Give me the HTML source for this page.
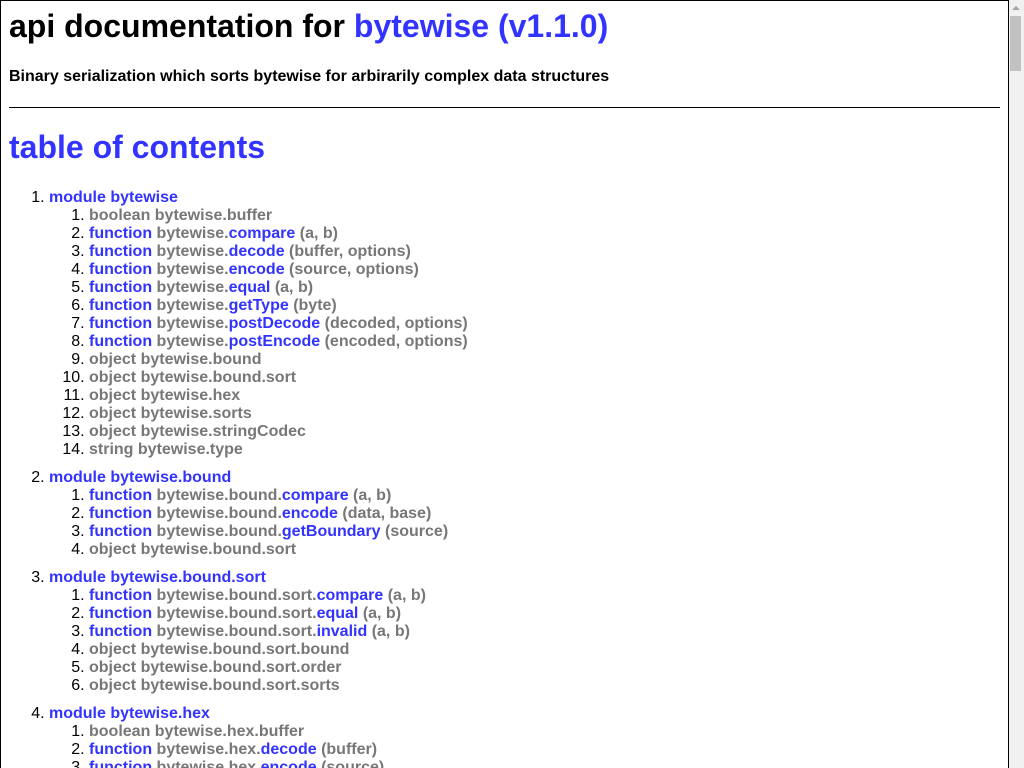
<!DOCTYPE html>
<html><head><style>
html,body{margin:0;padding:0;overflow:hidden;width:1024px;height:768px;background:#fff}
.page{position:absolute;left:0;top:0;width:1009px;height:768px;border:1px solid #000;border-bottom:0;box-sizing:border-box;padding:0 8px;font-family:"Liberation Sans",sans-serif;overflow:hidden}
h1{font-size:32px;line-height:37px;margin:7px 0 0;font-weight:bold}
h3{font-size:16px;line-height:18px;margin:23px 0 0;font-weight:bold}
hr{margin:21px 0 0;border:0;border-top:1px solid #000;height:0}
h1.toc{color:#33f;margin:21px 0 0}
.b{color:#33f}
.g{color:#777}
ol{margin:0;padding-left:40px}
ol.top{margin-top:23px}
li{font-size:16px;line-height:18px}
li>a,li>span{font-weight:bold;text-decoration:none}
ol.top>li{margin-bottom:10px}
.sb{position:absolute;left:1009px;top:0;width:15px;height:768px;background:#f1f1f1}
.th{position:absolute;left:1010px;top:16px;width:11px;height:55px;background:#c1c1c1}
.ar{position:absolute;left:1012px;top:6px;width:0;height:0;border-left:4px solid transparent;border-right:4px solid transparent;border-bottom:4px solid #a3a3a3}
</style></head><body>
<div class="page">
<h1>api documentation for <span class="b">bytewise (v1.1.0)</span></h1>
<h3>Binary serialization which sorts bytewise for arbirarily complex data structures</h3>
<hr>
<h1 class="toc">table of contents</h1>
<ol class="top">
<li><span class="b">module bytewise</span>
<ol>
<li><span class="g">boolean bytewise.buffer</span></li>
<li><span><span class="b">function</span> <span class="g">bytewise.</span><span class="b">compare</span> <span class="g">(a, b)</span></span></li>
<li><span><span class="b">function</span> <span class="g">bytewise.</span><span class="b">decode</span> <span class="g">(buffer, options)</span></span></li>
<li><span><span class="b">function</span> <span class="g">bytewise.</span><span class="b">encode</span> <span class="g">(source, options)</span></span></li>
<li><span><span class="b">function</span> <span class="g">bytewise.</span><span class="b">equal</span> <span class="g">(a, b)</span></span></li>
<li><span><span class="b">function</span> <span class="g">bytewise.</span><span class="b">getType</span> <span class="g">(byte)</span></span></li>
<li><span><span class="b">function</span> <span class="g">bytewise.</span><span class="b">postDecode</span> <span class="g">(decoded, options)</span></span></li>
<li><span><span class="b">function</span> <span class="g">bytewise.</span><span class="b">postEncode</span> <span class="g">(encoded, options)</span></span></li>
<li><span class="g">object bytewise.bound</span></li>
<li><span class="g">object bytewise.bound.sort</span></li>
<li><span class="g">object bytewise.hex</span></li>
<li><span class="g">object bytewise.sorts</span></li>
<li><span class="g">object bytewise.stringCodec</span></li>
<li><span class="g">string bytewise.type</span></li>
</ol></li>
<li><span class="b">module bytewise.bound</span>
<ol>
<li><span><span class="b">function</span> <span class="g">bytewise.bound.</span><span class="b">compare</span> <span class="g">(a, b)</span></span></li>
<li><span><span class="b">function</span> <span class="g">bytewise.bound.</span><span class="b">encode</span> <span class="g">(data, base)</span></span></li>
<li><span><span class="b">function</span> <span class="g">bytewise.bound.</span><span class="b">getBoundary</span> <span class="g">(source)</span></span></li>
<li><span class="g">object bytewise.bound.sort</span></li>
</ol></li>
<li><span class="b">module bytewise.bound.sort</span>
<ol>
<li><span><span class="b">function</span> <span class="g">bytewise.bound.sort.</span><span class="b">compare</span> <span class="g">(a, b)</span></span></li>
<li><span><span class="b">function</span> <span class="g">bytewise.bound.sort.</span><span class="b">equal</span> <span class="g">(a, b)</span></span></li>
<li><span><span class="b">function</span> <span class="g">bytewise.bound.sort.</span><span class="b">invalid</span> <span class="g">(a, b)</span></span></li>
<li><span class="g">object bytewise.bound.sort.bound</span></li>
<li><span class="g">object bytewise.bound.sort.order</span></li>
<li><span class="g">object bytewise.bound.sort.sorts</span></li>
</ol></li>
<li><span class="b">module bytewise.hex</span>
<ol>
<li><span class="g">boolean bytewise.hex.buffer</span></li>
<li><span><span class="b">function</span> <span class="g">bytewise.hex.</span><span class="b">decode</span> <span class="g">(buffer)</span></span></li>
<li><span><span class="b">function</span> <span class="g">bytewise.hex.</span><span class="b">encode</span> <span class="g">(source)</span></span></li>
</ol></li>
</ol>
</div>
<div class="sb"></div><div class="th"></div><div class="ar"></div>
</body></html>
